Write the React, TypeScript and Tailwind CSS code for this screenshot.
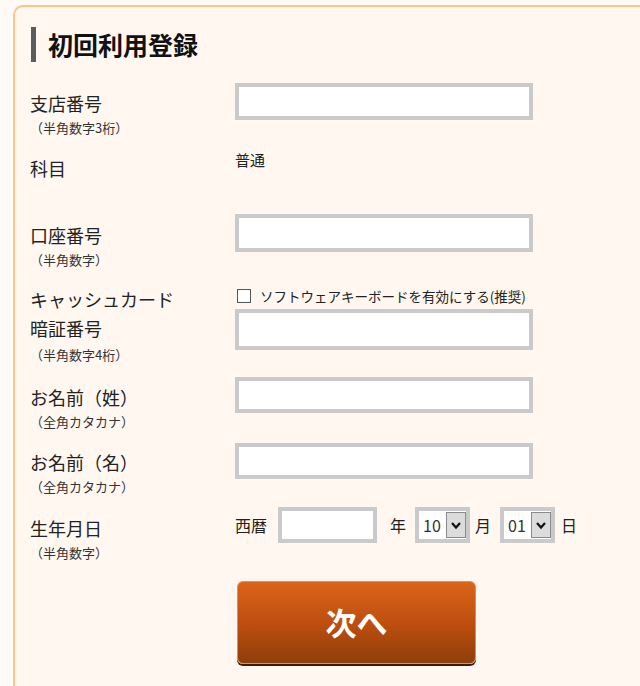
import React from "react";

const font = { fontFamily: '"Noto Sans CJK JP", "Noto Sans", sans-serif' };

function TextBox({ h = "h-[37px]" }: { h?: string }) {
    return <div className={`w-[298px] ${h} border-4 border-[#cacaca] bg-white`} />;
}

function Label({ main, sub, pt = "pt-2" }: { main: string; sub?: string; pt?: string }) {
    return (
        <div className={`w-[205px] shrink-0 ${pt}`}>
            <div className="text-[18px] leading-[24px] text-[#222]">{main}</div>
            {sub && <div className="mt-1 text-[13px] leading-[18px] text-[#333]">{sub}</div>}
        </div>
    );
}

function FakeSelect({ value }: { value: string }) {
    return (
        <div className="flex h-[36px] w-[55px] items-center border-4 border-[#cacaca] bg-white pl-1">
            <span className="flex-1 text-[16px] leading-none text-[#333]">{value}</span>
            <span className="flex h-[26px] w-[20px] items-center justify-center border border-[#8a8a8a] bg-[#dcdcdc]">
                <svg viewBox="0 0 12 12" className="h-[12px] w-[12px]">
                    <path d="M2 4 L6 8.5 L10 4" fill="none" stroke="#111" strokeWidth="2.2" />
                </svg>
            </span>
        </div>
    );
}

export default function App() {
    return (
        <div className="h-[686px] w-[640px] overflow-hidden bg-[#fffaf5] pl-[13px] pt-[5px]" style={font}>
            <div className="h-[720px] w-[680px] rounded-[10px] border-2 border-[#fdc48c] bg-[#fff7f0] pl-[15px] pt-[20px]">
                {/* heading */}
                <div className="flex h-[35px] items-center gap-3">
                    <div className="ml-[1px] h-[35px] w-[5px] bg-[#5b5b5b]" />
                    <h1 className="text-[25px] font-bold leading-none text-[#111]">初回利用登録</h1>
                </div>

                <div className="mt-[21px] flex h-[65px] items-start">
                    <Label main="支店番号" sub="（半角数字3桁）" />
                    <TextBox />
                </div>

                <div className="flex h-[66px] items-start">
                    <Label main="科目" />
                    <div className="text-[15px] leading-[24px] text-[#222]">普通</div>
                </div>

                <div className="flex h-[73px] items-start">
                    <Label main="口座番号" sub="（半角数字）" pt="pt-[9px]" />
                    <TextBox h="h-[38px]" />
                </div>

                <div className="flex h-[90px] items-start">
                    <div className="w-[205px] shrink-0">
                        <div className="text-[18px] leading-[24px] text-[#222]">キャッシュカード</div>
                        <div className="mt-[5px] text-[18px] leading-[24px] text-[#222]">暗証番号</div>
                        <div className="mt-[6px] text-[13px] leading-[18px] text-[#333]">（半角数字4桁）</div>
                    </div>
                    <div>
                        <label className="flex h-[18px] items-center gap-[9px] pl-[2px] text-[13.5px] leading-[18px] text-[#222]">
                            <span className="h-[14px] w-[14px] border border-[#555] bg-white" />
                            ソフトウェアキーボードを有効にする(推奨)
                        </label>
                        <div className="mt-1">
                            <TextBox h="h-[41px]" />
                        </div>
                    </div>
                </div>

                <div className="flex h-[66px] items-start">
                    <Label main="お名前（姓）" sub="（全角カタカナ）" />
                    <TextBox h="h-[36px]" />
                </div>

                <div className="flex h-[64px] items-start">
                    <Label main="お名前（名）" sub="（全角カタカナ）" pt="pt-[7px]" />
                    <TextBox h="h-[36px]" />
                </div>

                <div className="flex h-[74px] items-start">
                    <Label main="生年月日" sub="（半角数字）" pt="pt-[9px]" />
                    <div className="flex h-[36px] items-center text-[16px] text-[#222]">
                        <span>西暦</span>
                        <div className="ml-[11px] h-[36px] w-[99px] border-4 border-[#cacaca] bg-white" />
                        <span className="ml-[13px] mr-[9px]">年</span>
                        <FakeSelect value="10" />
                        <span className="ml-[5px] mr-[9px]">月</span>
                        <FakeSelect value="01" />
                        <span className="ml-[6px]">日</span>
                    </div>
                </div>

                <div className="pl-[207px]">
                    <button
                        type="button"
                        className="flex h-[83px] w-[239px] items-center justify-center rounded-[6px] border border-[#e98a4e] bg-gradient-to-b from-[#dc641b] via-[#bf4f0f] via-50% to-[#8f3d0b] text-[31px] font-bold text-white shadow-[0_2px_0_#3a1c0a]"
                    >
                        次へ
                    </button>
                </div>
            </div>
        </div>
    );
}
